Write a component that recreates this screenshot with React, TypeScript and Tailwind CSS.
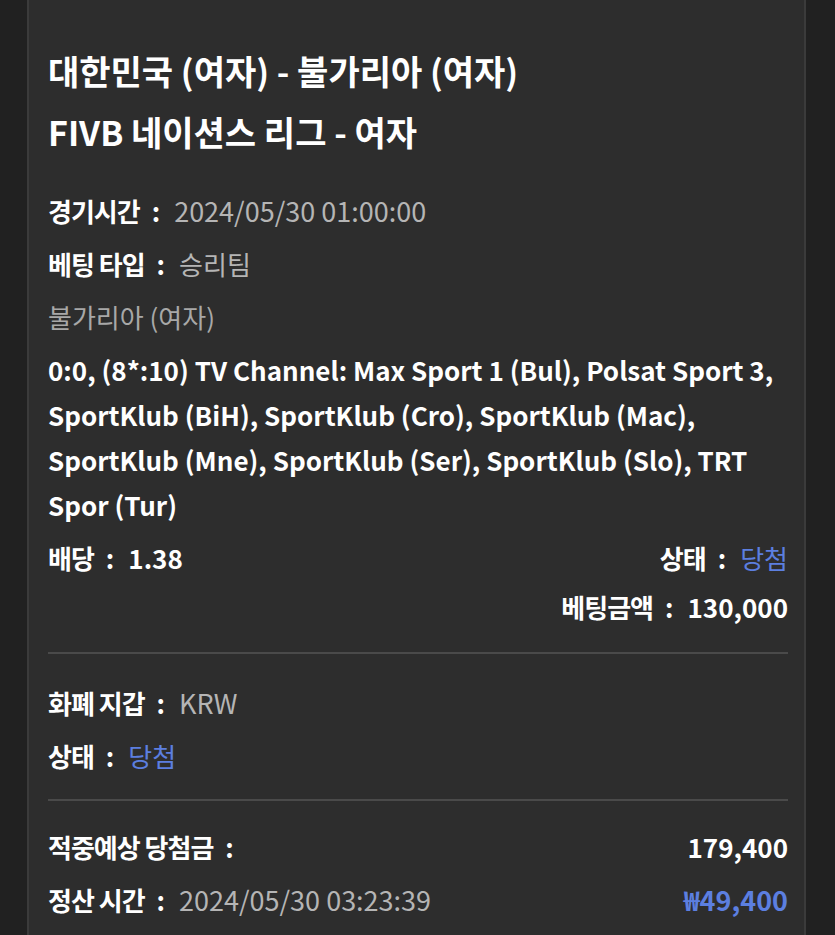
import React from 'react';

const FONT = { fontFamily: '"Noto Sans CJK KR", "Noto Sans", sans-serif' };

const Label: React.FC<{ label: string; children?: React.ReactNode }> = ({ label, children }) => (
    <span className="whitespace-nowrap">
        <span className="font-bold text-white">
            <span className="tracking-[-1px]">{label}</span>
            <span className="ml-[12px] mr-[14px]">:</span>
        </span>
        {children}
    </span>
);

const App: React.FC = () => {
    return (
        <div className="min-h-screen bg-[#212121] overflow-hidden" style={FONT}>
            <div className="ml-[27px] w-[779px] h-[935px] border-x-2 border-[#3b3b3b] bg-[#2d2d2d] pl-[19px] pr-[16px] pt-[40px] text-[26px] leading-[45px]">
                <h1 className="text-[34px] leading-[61px] font-bold text-white">
                    <div>대한민국 (여자) - 불가리아 (여자)</div>
                    <div>FIVB 네이션스 리그 - 여자</div>
                </h1>

                <div className="mt-[26px] flex flex-col gap-2">
                    <Label label="경기시간">
                        <span className="text-[#b5b5b5] text-[27px]">2024/05/30 01:00:00</span>
                    </Label>
                    <Label label="베팅 타입">
                        <span className="text-[#b5b5b5]">승리팀</span>
                    </Label>
                    <div className="text-[#a8a8a8]">불가리아 (여자)</div>
                    <p className="font-semibold text-white">
                        0:0, (8*:10) TV Channel: Max Sport 1 (Bul), Polsat Sport 3, SportKlub (BiH), SportKlub (Cro), SportKlub (Mac), SportKlub (Mne), SportKlub (Ser), SportKlub (Slo), TRT Spor (Tur)
                    </p>
                    <div className="flex justify-between">
                        <Label label="배당">
                            <span className="font-bold text-white">1.38</span>
                        </Label>
                        <Label label="상태">
                            <span className="text-[#5c7fe0]">당첨</span>
                        </Label>
                    </div>
                    <div className="-mt-1 flex justify-end">
                        <Label label="베팅금액">
                            <span className="font-bold text-white">130,000</span>
                        </Label>
                    </div>
                </div>

                <hr className="mt-[23px] border-0 h-[2px] bg-[#4a4a4a]" />

                <div className="mt-[26px] flex flex-col gap-2">
                    <Label label="화폐 지갑">
                        <span className="text-[#b5b5b5] text-[27px]">KRW</span>
                    </Label>
                    <Label label="상태">
                        <span className="text-[#5c7fe0]">당첨</span>
                    </Label>
                </div>

                <hr className="mt-[21px] border-0 h-[2px] bg-[#4a4a4a]" />

                <div className="mt-[23px] flex flex-col gap-2">
                    <div className="flex justify-between">
                        <Label label="적중예상 당첨금" />
                        <span className="font-bold text-white">179,400</span>
                    </div>
                    <div className="flex justify-between">
                        <Label label="정산 시간">
                            <span className="text-[#b5b5b5] text-[27px]">2024/05/30 03:23:39</span>
                        </Label>
                        <span className="font-bold text-[#5c7fe0] text-[27px]">₩49,400</span>
                    </div>
                </div>
            </div>
        </div>
    );
};

export default App;
